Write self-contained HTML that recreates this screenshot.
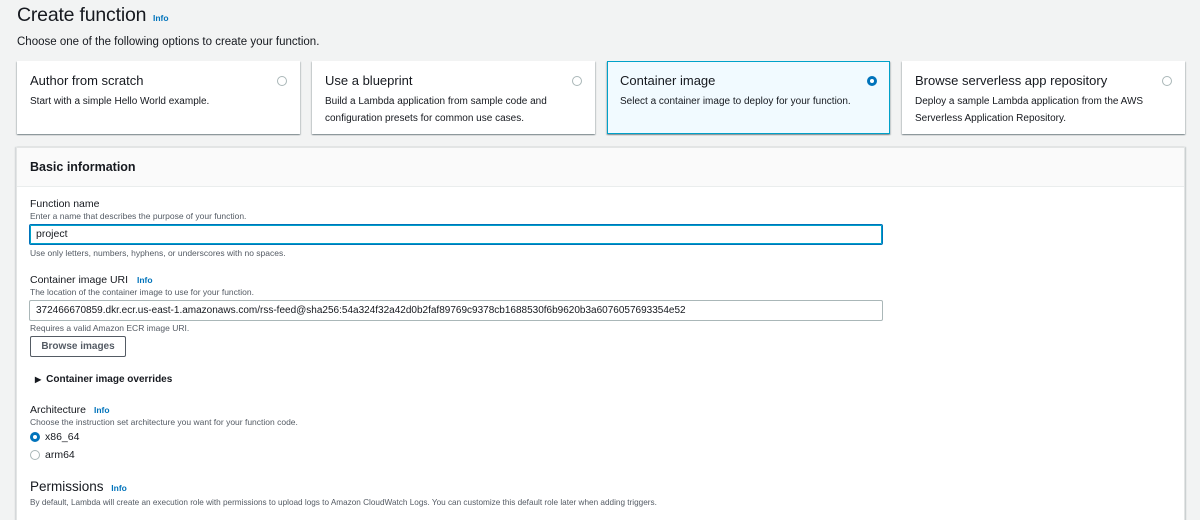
<!DOCTYPE html>
<html><head><meta charset="utf-8"><style>
*{margin:0;padding:0;box-sizing:border-box}
html,body{width:1200px;height:520px;overflow:hidden}
body{background:#f2f3f3;font-family:"Liberation Sans",sans-serif;color:#16191f;position:relative}
.a{position:absolute;white-space:nowrap}
.info{color:#0073bb;font-weight:bold;font-size:8.5px}
.card{position:absolute;top:61px;width:283px;height:73px;background:#fff;box-shadow:0 1px 1px rgba(0,28,36,.3),1px 1px 1px rgba(0,28,36,.15),-1px 1px 1px rgba(0,28,36,.15)}
.card.sel{background:#f1faff;border:1px solid #00a1c9}
.card .t{position:absolute;left:13px;top:12px;font-size:13px}
.card .d{position:absolute;left:13px;top:33px;font-size:10px;line-height:16.5px;width:240px}
.rad{position:absolute;width:10px;height:10px;border:1px solid #aab7b8;border-radius:50%;background:#fff}
.rad.on{border:3px solid #0073bb}
.card .rad{right:13px;top:15px}
.lbl{font-size:10.5px}
.hint{font-size:8.5px;color:#545b64}
.inp{position:absolute;left:29px;width:854px;height:21px;border:1px solid #aab7b8;border-radius:2px;background:#fff;font-size:10.5px;padding:0 0 0 9px;line-height:19px}
</style></head><body>
<div class="a" style="left:17px;top:2px;font-size:19.5px;line-height:26px;letter-spacing:-.2px">Create function</div>
<div class="a info" style="left:153px;top:13px">Info</div>
<div class="a" style="left:17px;top:35px;font-size:11.5px;line-height:14px">Choose one of the following options to create your function.</div>

<div class="card" style="left:17px"><div class="t">Author from scratch</div><div class="d">Start with a simple Hello World example.</div><div class="rad"></div></div>
<div class="card" style="left:312px"><div class="t">Use a blueprint</div><div class="d">Build a Lambda application from sample code and configuration presets for common use cases.</div><div class="rad"></div></div>
<div class="card sel" style="left:607px"><div class="t" style="left:12px;top:11px">Container image</div><div class="d" style="left:12px;top:32px">Select a container image to deploy for your function.</div><div class="rad on" style="right:12px;top:14px"></div></div>
<div class="card" style="left:902px"><div class="t">Browse serverless app repository</div><div class="d">Deploy a sample Lambda application from the AWS Serverless Application Repository.</div><div class="rad"></div></div>

<div style="position:absolute;left:16px;top:147px;width:1169px;height:380px;background:#fff;border:1px solid #e3e5e5;box-shadow:1px 0 1px rgba(0,28,36,.2),-1px 0 1px rgba(0,28,36,.15)">
<div style="height:39px;background:#fafafa;border-bottom:1px solid #eaeded"></div>
</div>
<div class="a" style="left:30px;top:160px;font-size:12.5px;font-weight:bold;line-height:15px">Basic information</div>

<div class="a lbl" style="left:30px;top:198px">Function name</div>
<div class="a hint" style="left:30px;top:211px">Enter a name that describes the purpose of your function.</div>
<div class="inp" style="top:224px;border:1px solid #0073bb;box-shadow:0 0 0 1px #00a1c9 inset;padding-left:6px">project</div>
<div class="a hint" style="left:30px;top:248px">Use only letters, numbers, hyphens, or underscores with no spaces.</div>

<div class="a lbl" style="left:30px;top:274px">Container image URI <span class="info" style="margin-left:6px">Info</span></div>
<div class="a hint" style="left:30px;top:287px">The location of the container image to use for your function.</div>
<div class="inp" style="top:300px;font-size:10px;padding-left:6px">372466670859.dkr.ecr.us-east-1.amazonaws.com/rss-feed@sha256:54a324f32a42d0b2faf89769c9378cb1688530f6b9620b3a6076057693354e52</div>
<div class="a hint" style="left:30px;top:323px">Requires a valid Amazon ECR image URI.</div>
<div style="position:absolute;left:30px;top:336px;width:96px;height:21px;border:1px solid #545b64;border-radius:2px;background:#fff;font-size:10px;font-weight:bold;color:#545b64;text-align:center;line-height:19px">Browse images</div>

<div class="a" style="left:35px;top:374px;font-size:10px;font-weight:bold;line-height:12px"><span style="font-size:8px;margin-right:5px">&#9654;</span>Container image overrides</div>

<div class="a lbl" style="left:30px;top:404px">Architecture <span class="info" style="margin-left:5px">Info</span></div>
<div class="a hint" style="left:30px;top:417px">Choose the instruction set architecture you want for your function code.</div>
<div class="rad on" style="left:30px;top:432px"></div><div class="a lbl" style="left:45px;top:431px">x86_64</div>
<div class="rad" style="left:30px;top:450px"></div><div class="a lbl" style="left:45px;top:449px">arm64</div>

<div class="a" style="left:30px;top:479px;font-size:13.5px">Permissions <span class="info" style="margin-left:4px">Info</span></div>
<div class="a hint" style="left:30px;top:498px;font-size:8.2px">By default, Lambda will create an execution role with permissions to upload logs to Amazon CloudWatch Logs. You can customize this default role later when adding triggers.</div>
</body></html>
